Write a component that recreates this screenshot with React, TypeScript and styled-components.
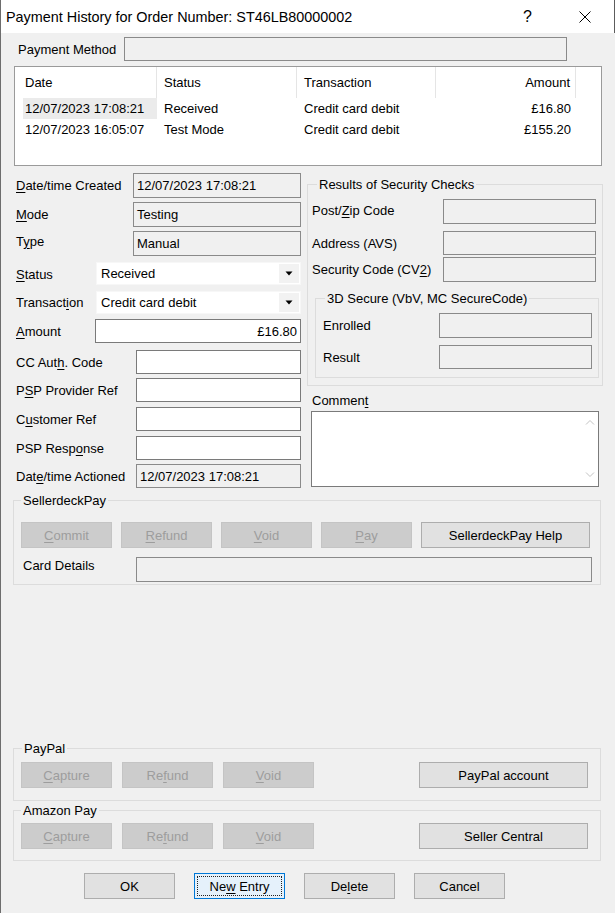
import React from "react";
import styled, { createGlobalStyle } from "styled-components";

const GlobalStyle = createGlobalStyle`
  html, body {
    margin: 0;
    padding: 0;
    background: #f0f0f0;
  }
  body {
    font-family: "Liberation Sans", Arial, sans-serif;
    font-size: 13px;
    color: #000;
  }
  * {
    box-sizing: border-box;
  }
`;

const Window = styled.div`
  width: 615px;
  height: 913px;
  display: flex;
  flex-direction: column;
  background: #f0f0f0;
  border-left: 1px solid #6d6d6d;
  overflow: hidden;
`;

const TitleBar = styled.div`
  height: 33px;
  flex: none;
  display: flex;
  align-items: center;
  background: #fff;
  border-right: 1px solid #5c5c5c;
`;

const Title = styled.div`
  flex: 1;
  padding-left: 5px;
  font-size: 14.4px;
  white-space: nowrap;
`;

const CaptionButton = styled.div<{ $w: number }>`
  width: ${(p) => p.$w}px;
  height: 33px;
  display: flex;
  align-items: center;
  justify-content: center;
  font-size: 16px;
`;

const Body = styled.div`
  flex: 1;
  display: flex;
  flex-direction: column;
  padding: 4px 12px 0 13px;
`;

const Row = styled.div<{ $top?: number; $h?: number }>`
  display: flex;
  align-items: center;
  flex: none;
  height: ${(p) => p.$h ?? 24}px;
  margin-top: ${(p) => p.$top ?? 0}px;
`;

// $up nudges a label above the row centre, as the dialog does for a few captions
const Label = styled.div<{ $w: number; $pl?: number; $up?: number }>`
  width: ${(p) => p.$w}px;
  flex: none;
  padding-left: ${(p) => p.$pl ?? 2}px;
  margin-bottom: ${(p) => (p.$up ?? 0) * 2}px;
  white-space: nowrap;
`;

const U = styled.span`
  text-decoration: underline;
  text-underline-offset: 2px;
`;

type Kind = "readonly" | "edit" | "combo";

const Field = styled.div<{ $kind: Kind; $w?: number; $right?: boolean }>`
  height: 100%;
  ${(p) => (p.$w ? `width: ${p.$w}px; flex: none;` : "flex: 1;")}
  display: flex;
  align-items: center;
  justify-content: ${(p) => (p.$right ? "flex-end" : "flex-start")};
  padding: ${(p) => (p.$kind === "combo" ? "0 1px 0 4px" : "0 3px")};
  white-space: nowrap;
  background: ${(p) => (p.$kind === "readonly" ? "#f0f0f0" : "#fff")};
  border: 1px solid
    ${(p) =>
      p.$kind === "readonly" ? "#8a8a8a" : p.$kind === "edit" ? "#7a7a7a" : "#f7f7f7"};
`;

const ComboText = styled.span`
  flex: 1;
`;

const ComboArrow = styled.div`
  width: 20px;
  height: 19px;
  display: flex;
  align-items: center;
  justify-content: center;
  background: #f2f2f2;
`;

const ListView = styled.div`
  margin-top: 5px;
  margin-right: 1px;
  height: 100px;
  flex: none;
  background: #fff;
  border: 1px solid #9a9a9a;
`;

const ListGrid = styled.div<{ $h: number }>`
  display: grid;
  grid-template-columns: 142px 140px 139px 140px;
  height: ${(p) => p.$h}px;
`;

const HeadCell = styled.div<{ $first?: boolean; $right?: boolean }>`
  display: flex;
  align-items: center;
  justify-content: ${(p) => (p.$right ? "flex-end" : "flex-start")};
  padding: ${(p) => (p.$first ? "0 0 0 10px" : p.$right ? "0 5px 0 0" : "0 0 0 7px")};
  border-right: 1px solid #e5e5e5;
  white-space: nowrap;
`;

const Cell = styled.div<{ $first?: boolean; $right?: boolean }>`
  display: flex;
  align-items: stretch;
  justify-content: ${(p) => (p.$right ? "flex-end" : "flex-start")};
  padding: ${(p) => (p.$first ? "0 0 0 8px" : p.$right ? "0 5px 0 0" : "0 0 0 7px")};
  white-space: nowrap;
`;

const CellText = styled.span<{ $sel?: boolean; $fill?: boolean }>`
  display: flex;
  align-items: center;
  padding-left: ${(p) => (p.$fill ? 2 : 0)}px;
  ${(p) => (p.$fill ? "flex: 1;" : "")}
  background: ${(p) => (p.$sel ? "#ebebeb" : "transparent")};
`;

const Columns = styled.div`
  display: flex;
  gap: 6px;
  flex: none;
`;

const LeftCol = styled.div`
  width: 287px;
  flex: none;
  display: flex;
  flex-direction: column;
`;

const RightCol = styled.div`
  flex: 1;
  display: flex;
  flex-direction: column;
`;

const Group = styled.fieldset<{ $top: number; $pad: string; $ml?: number; $mr?: number }>`
  margin: ${(p) => p.$top}px ${(p) => p.$mr ?? 0}px 0 ${(p) => p.$ml ?? 0}px;
  padding: ${(p) => p.$pad};
  border: 1px solid #dcdcdc;
  min-width: 0;
  display: flex;
  flex-direction: column;
  flex: none;
`;

const Legend = styled.legend<{ $ml?: number }>`
  padding: 0 2px;
  margin-left: ${(p) => p.$ml ?? 0}px;
  line-height: 15px;
  font-size: 13px;
  white-space: nowrap;
`;

const CommentLabel = styled.div`
  margin-top: 7px;
  line-height: 15px;
  padding-left: 5px;
`;

const Memo = styled.div`
  margin: 3px 0 0 4px;
  width: 288px;
  height: 76px;
  display: flex;
  background: #fff;
  border: 1px solid #7a7a7a;
`;

const MemoText = styled.div`
  flex: 1;
`;

const ScrollTrack = styled.div`
  width: 17px;
  display: flex;
  flex-direction: column;
  justify-content: space-between;
  align-items: center;
  padding: 7px 0 8px;
`;

const ButtonRow = styled.div<{ $top: number; $gap: number; $pl?: number }>`
  display: flex;
  flex: none;
  height: 26px;
  margin-top: ${(p) => p.$top}px;
  gap: ${(p) => p.$gap}px;
  padding-left: ${(p) => p.$pl ?? 0}px;
`;

const Button = styled.button<{ $w: number; $off?: boolean; $focus?: boolean; $push?: boolean }>`
  position: relative;
  width: ${(p) => p.$w}px;
  height: 26px;
  flex: none;
  padding: 0;
  display: flex;
  align-items: center;
  justify-content: center;
  font-family: "Liberation Sans", Arial, sans-serif;
  font-size: 13px;
  color: ${(p) => (p.$off ? "#9d9d9d" : "#000")};
  background: ${(p) => (p.$off ? "#cccccc" : p.$focus ? "#e5f1fb" : "#e1e1e1")};
  border: 1px solid ${(p) => (p.$off ? "#c4c4c4" : p.$focus ? "#0078d7" : "#adadad")};
  ${(p) => (p.$push ? "margin-left: auto; margin-right: 4px;" : "")}
  ${(p) =>
    p.$focus
      ? `&::after {
          content: "";
          position: absolute;
          inset: 2px;
          border: 1px dotted #222;
        }`
      : ""}
`;

const Spacer = styled.div`
  height: 156px;
  flex: none;
`;

const Caret = () => (
  <svg width="8" height="5" viewBox="0 0 8 5">
    <path d="M0.5 0.5h7L4 4.5z" fill="#000" />
  </svg>
);

const Chevron = ({ up }: { up?: boolean }) => (
  <svg width="10" height="6" viewBox="0 0 10 6">
    <path
      d={up ? "M1 5.5L5 1.5L9 5.5" : "M1 0.5L5 4.5L9 0.5"}
      fill="none"
      stroke="#c2c2c2"
      strokeWidth="1"
    />
  </svg>
);

type Hist = { date: string; status: string; tx: string; amount: string; sel?: boolean };

const history: Hist[] = [
  { date: "12/07/2023 17:08:21", status: "Received", tx: "Credit card debit", amount: "£16.80", sel: true },
  { date: "12/07/2023 16:05:07", status: "Test Mode", tx: "Credit card debit", amount: "£155.20" },
];

export default function App() {
  return (
    <>
      <GlobalStyle />
      <Window>
        <TitleBar>
          <Title>Payment History for Order Number: ST46LB80000002</Title>
          <CaptionButton $w={57}>?</CaptionButton>
          <CaptionButton $w={58}>
            <svg width="12" height="12" viewBox="0 0 12 12">
              <path d="M0.5 0.5L11.5 11.5M11.5 0.5L0.5 11.5" stroke="#000" strokeWidth="1" />
            </svg>
          </CaptionButton>
        </TitleBar>

        <Body>
          <Row>
            <Label $w={110} $pl={4}>Payment Method</Label>
            <Field $kind="readonly" $w={443} />
          </Row>

          <ListView>
            <ListGrid $h={31}>
              <HeadCell $first>Date</HeadCell>
              <HeadCell>Status</HeadCell>
              <HeadCell>Transaction</HeadCell>
              <HeadCell $right>Amount</HeadCell>
            </ListGrid>
            {history.map((h) => (
              <ListGrid $h={21} key={h.date}>
                <Cell $first>
                  <CellText $fill $sel={h.sel}>{h.date}</CellText>
                </Cell>
                <Cell>
                  <CellText>{h.status}</CellText>
                </Cell>
                <Cell>
                  <CellText>{h.tx}</CellText>
                </Cell>
                <Cell $right>
                  <CellText>{h.amount}</CellText>
                </Cell>
              </ListGrid>
            ))}
          </ListView>

          <Columns>
            <LeftCol>
              <Row $top={7} $h={25}>
                <Label $w={119}><U>D</U>ate/time Created</Label>
                <Field $kind="readonly">12/07/2023 17:08:21</Field>
              </Row>
              <Row $top={4} $h={25}>
                <Label $w={119}><U>M</U>ode</Label>
                <Field $kind="readonly">Testing</Field>
              </Row>
              <Row $top={4} $h={25}>
                <Label $w={119} $up={2}>T<U>y</U>pe</Label>
                <Field $kind="readonly">Manual</Field>
              </Row>
              <Row $top={6} $h={23}>
                <Label $w={82} $up={-1}><U>S</U>tatus</Label>
                <Field $kind="combo">
                  <ComboText>Received</ComboText>
                  <ComboArrow><Caret /></ComboArrow>
                </Field>
              </Row>
              <Row $top={6} $h={23}>
                <Label $w={82}>Transact<U>i</U>on</Label>
                <Field $kind="combo">
                  <ComboText>Credit card debit</ComboText>
                  <ComboArrow><Caret /></ComboArrow>
                </Field>
              </Row>
              <Row $top={5} $h={24}>
                <Label $w={81}><U>A</U>mount</Label>
                <Field $kind="edit" $right>£16.80</Field>
              </Row>
              <Row $top={7}>
                <Label $w={122}>CC Aut<U>h</U>. Code</Label>
                <Field $kind="edit" />
              </Row>
              <Row $top={4}>
                <Label $w={122}>P<U>S</U>P Provider Ref</Label>
                <Field $kind="edit" />
              </Row>
              <Row $top={5}>
                <Label $w={122}>C<U>u</U>stomer Ref</Label>
                <Field $kind="edit" />
              </Row>
              <Row $top={5}>
                <Label $w={122}>PSP Resp<U>o</U>nse</Label>
                <Field $kind="edit" />
              </Row>
              <Row $top={4}>
                <Label $w={122}>Dat<U>e</U>/time Actioned</Label>
                <Field $kind="readonly">12/07/2023 17:08:21</Field>
              </Row>
            </LeftCol>

            <RightCol>
              <Group $top={11} $pad="0 3px 7px 4px">
                <Legend $ml={5}>Results of Security Checks</Legend>
                <Row $top={7} $h={25}>
                  <Label $w={131} $pl={0} $up={1}>Post/<U>Z</U>ip Code</Label>
                  <Field $kind="readonly" $w={153} />
                </Row>
                <Row $top={7} $h={24}>
                  <Label $w={131} $pl={0}>Address (AVS)</Label>
                  <Field $kind="readonly" $w={153} />
                </Row>
                <Row $top={2} $h={25}>
                  <Label $w={131} $pl={0}>Security Code (CV<U>2</U>)</Label>
                  <Field $kind="readonly" $w={153} />
                </Row>
                <Group $top={9} $ml={3} $pad="0 6px 8px 7px">
                  <Legend $ml={2}>3D Secure (VbV, MC SecureCode)</Legend>
                  <Row $top={7} $h={25}>
                    <Label $w={116} $pl={0}>Enrolled</Label>
                    <Field $kind="readonly" $w={153} />
                  </Row>
                  <Row $top={7} $h={24}>
                    <Label $w={116} $pl={0}>Result</Label>
                    <Field $kind="readonly" $w={153} />
                  </Row>
                </Group>
              </Group>
              <CommentLabel>Commen<U>t</U></CommentLabel>
              <Memo>
                <MemoText />
                <ScrollTrack>
                  <Chevron up />
                  <Chevron />
                </ScrollTrack>
              </Memo>
            </RightCol>
          </Columns>

          <Group $top={5} $ml={-1} $mr={2} $pad="0 8px 2px 7px">
            <Legend>SellerdeckPay</Legend>
            <ButtonRow $top={14} $gap={9}>
              <Button $w={91} $off><span><U>C</U>ommit</span></Button>
              <Button $w={91} $off><span><U>R</U>efund</span></Button>
              <Button $w={91} $off><span><U>V</U>oid</span></Button>
              <Button $w={91} $off><span><U>P</U>ay</span></Button>
              <Button $w={169} $push>SellerdeckPay Help</Button>
            </ButtonRow>
            <Row $top={9} $h={25}>
              <Label $w={115} $up={4}>Card Details</Label>
              <Field $kind="readonly" />
            </Row>
          </Group>

          <Spacer />

          <Group $top={0} $ml={-1} $mr={2} $pad="0 8px 12px 7px">
            <Legend $ml={1}>PayPal</Legend>
            <ButtonRow $top={6} $gap={10}>
              <Button $w={91} $off><span><U>C</U>apture</span></Button>
              <Button $w={91} $off><span>Re<U>f</U>und</span></Button>
              <Button $w={91} $off><span><U>V</U>oid</span></Button>
              <Button $w={169} $push>PayPal account</Button>
            </ButtonRow>
          </Group>

          <Group $top={2} $ml={-1} $mr={2} $pad="0 8px 11px 7px">
            <Legend>Amazon Pay</Legend>
            <ButtonRow $top={5} $gap={10}>
              <Button $w={91} $off><span><U>C</U>apture</span></Button>
              <Button $w={91} $off><span>Re<U>f</U>und</span></Button>
              <Button $w={91} $off><span><U>V</U>oid</span></Button>
              <Button $w={169} $push>Seller Central</Button>
            </ButtonRow>
          </Group>

          <ButtonRow $top={12} $gap={19} $pl={70}>
            <Button $w={91}>OK</Button>
            <Button $w={91} $focus><span>Ne<U>w</U> Entry</span></Button>
            <Button $w={91}><span>De<U>l</U>ete</span></Button>
            <Button $w={91}>Cancel</Button>
          </ButtonRow>
        </Body>
      </Window>
    </>
  );
}
